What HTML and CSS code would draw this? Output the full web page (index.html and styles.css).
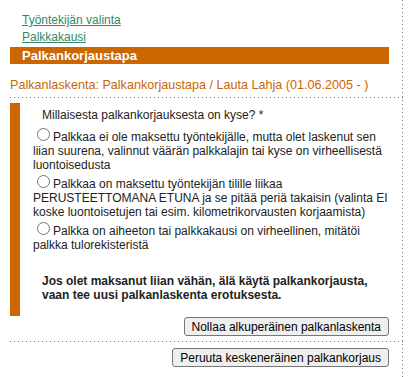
FILE: index.html
```html
<!DOCTYPE html>
<html lang="fi">
<head>
<meta charset="utf-8">
<title>Palkankorjaustapa</title>
<link rel="stylesheet" href="styles.css">
</head>
<body>
<div class="page">
  <nav class="steps">
    <a class="step" href="#">Työntekijän valinta</a>
    <a class="step" href="#">Palkkakausi</a>
    <div class="step step-active">Palkankorjaustapa</div>
  </nav>
  <h1 class="title">Palkanlaskenta: Palkankorjaustapa / Lauta Lahja (01.06.2005 - )</h1>
  <div class="dots"></div>
  <div class="panel">
    <div class="question">Millaisesta palkankorjauksesta on kyse? *</div>
    <div class="options">
      <label class="option"><input type="radio" name="tapa" class="radio">Palkkaa ei ole maksettu työntekijälle, mutta olet laskenut sen liian suurena, valinnut väärän palkkalajin tai kyse on virheellisestä luontoisedusta</label>
      <label class="option"><input type="radio" name="tapa" class="radio">Palkkaa on maksettu työntekijän tilille liikaa PERUSTEETTOMANA ETUNA ja se pitää periä takaisin (valinta EI koske luontoisetujen tai esim. kilometrikorvausten korjaamista)</label>
      <label class="option"><input type="radio" name="tapa" class="radio">Palkka on aiheeton tai palkkakausi on virheellinen, mitätöi palkka tulorekisteristä</label>
    </div>
    <p class="warning">Jos olet maksanut liian vähän, älä käytä palkankorjausta, vaan tee uusi palkanlaskenta erotuksesta.</p>
  </div>
  <div class="actions actions-first"><button class="btn" type="button">Nollaa alkuperäinen palkanlaskenta</button></div>
  <div class="dots dots-lower"></div>
  <div class="actions actions-second"><button class="btn" type="button">Peruuta keskeneräinen palkankorjaus</button></div>
</div>
</body>
</html>
```

FILE: styles.css
```css
html, body {
  margin: 0;
  padding: 0;
  background: #ffffff;
}

body {
  font-family: "Liberation Sans", Arial, sans-serif;
  font-size: 12px;
  color: #222222;
}

.page {
  width: 403px;
  min-height: 377px;
  box-sizing: border-box;
  padding: 12px 0 0 10px;
  background-image: linear-gradient(to bottom, #777777 1px, transparent 1px);
  background-size: 1px 4px;
  background-repeat: repeat-y;
  background-position: right top;
}

.steps {
  display: flex;
  flex-direction: column;
}

.step {
  display: block;
  padding-left: 12px;
  line-height: 17px;
  height: 17px;
  font-size: 12px;
  color: #338866;
  text-decoration: underline;
}

.step-active {
  margin-top: 1px;
  margin-right: 14px;
  background: #cc6600;
  color: #ffffff;
  font-weight: bold;
  font-size: 13px;
  text-decoration: none;
}

.title {
  margin: 14px 0 0 0;
  font-size: 12.6px;
  font-weight: normal;
  line-height: 15px;
  color: #cc6600;
}

.dots {
  height: 1px;
  margin-top: 4px;
  background-image: linear-gradient(to right, #777777 1px, transparent 1px);
  background-size: 4px 1px;
  background-repeat: repeat-x;
}

.dots-lower {
  margin-top: 5px;
}

.panel {
  margin: 5px 14px 0 0;
  border-left: 10px solid #cc6600;
  padding: 5px 0 14px 13px;
}

.question {
  padding-left: 9px;
  line-height: 14px;
}

.options {
  margin-top: 3px;
  display: flex;
  flex-direction: column;
}

.option {
  display: block;
}

.radio {
  margin: 3px 3px 0 4px;
  width: 13px;
  height: 13px;
}

.warning {
  margin: 22px 0 0 0;
  padding-left: 9px;
  font-weight: bold;
  line-height: 14px;
}

.actions {
  display: flex;
  justify-content: flex-end;
  margin-right: 14px;
}

.actions-first {
  margin-top: 1px;
}

.actions-second {
  margin-top: 6px;
}

.btn {
  height: 19px;
  padding: 0 7px;
  font-family: "Liberation Sans", Arial, sans-serif;
  font-size: 12px;
  color: #000000;
  background: #efefef;
  border: 1px solid #767676;
  border-radius: 3px;
}
```
